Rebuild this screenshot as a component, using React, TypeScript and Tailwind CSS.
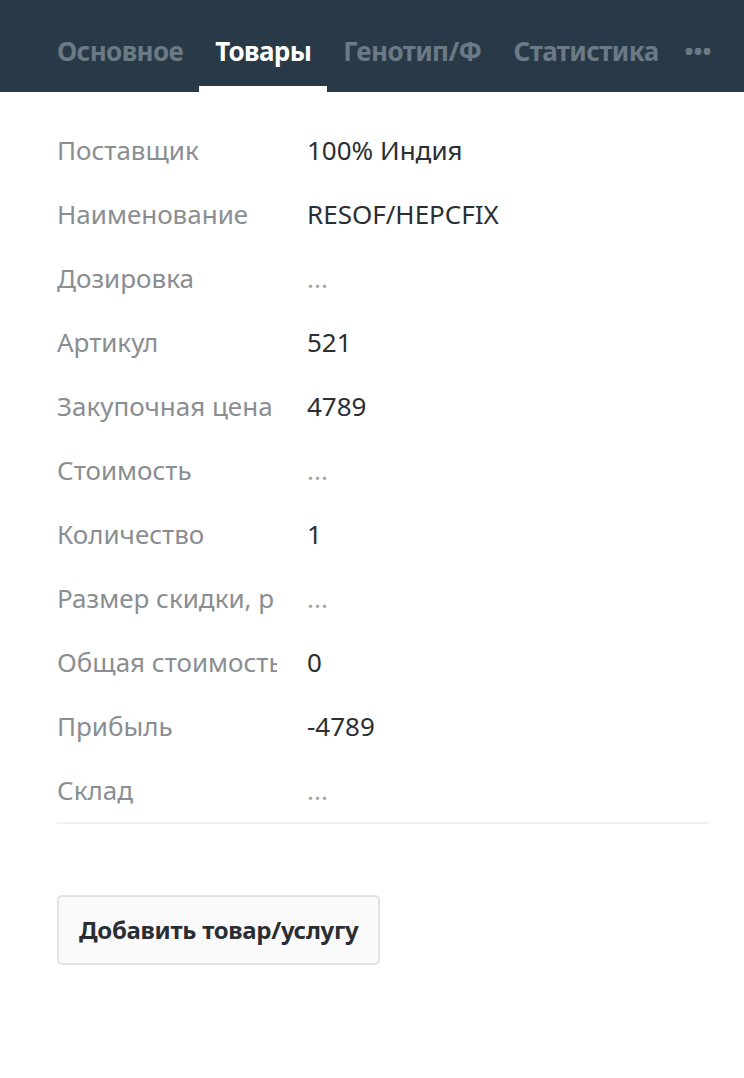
const TABS = ['Основное', 'Товары', 'Генотип/Ф', 'Статистика']

const ROWS: { label: string; value: string }[] = [
  { label: 'Поставщик', value: '100% Индия' },
  { label: 'Наименование', value: 'RESOF/HEPCFIX' },
  { label: 'Дозировка', value: '...' },
  { label: 'Артикул', value: '521' },
  { label: 'Закупочная цена', value: '4789' },
  { label: 'Стоимость', value: '...' },
  { label: 'Количество', value: '1' },
  { label: 'Размер скидки, р', value: '...' },
  { label: 'Общая стоимость', value: '0' },
  { label: 'Прибыль', value: '-4789' },
  { label: 'Склад', value: '...' },
]

export default function App() {
  return (
    <div className="w-[744px] min-h-[1078px] bg-white" style={{ fontFamily: '"Noto Sans", sans-serif' }}>
      {/* Tabs */}
      <div className="h-[92px] bg-[#283a48] flex items-stretch pl-[57px] overflow-hidden">
        {TABS.map((t, i) => (
          <div
            key={t}
            className={
              'relative flex items-center pt-[10px] px-[16px] first:pl-0 text-[26px] font-bold tracking-[-0.6px] whitespace-nowrap ' +
              (i === 1 ? 'text-white' : 'text-[#6b7a85]')
            }
          >
            {t}
            {i === 1 && <div className="absolute left-0 right-0 bottom-0 h-[6px] bg-white" />}
          </div>
        ))}
        <div className="flex items-center pt-[10px] pl-[10px] text-[24px] font-bold text-[#6b7a85] tracking-[0px]">•••</div>
      </div>

      {/* Fields */}
      <div className="pl-[57px] pr-[35px] pt-[26px]">
        <div className="border-b-2 border-[#f0f0f0]">
          {ROWS.map(r => (
            <div key={r.label} className="flex items-center h-[64px] text-[26px]">
              <div className="w-[220px] shrink-0 overflow-hidden whitespace-nowrap text-[#8a8e92]">{r.label}</div>
              <div className={'ml-[30px] ' + (r.value === '...' ? 'text-[#a0a4a8]' : 'text-[#2b2f33]')}>{r.value}</div>
            </div>
          ))}
        </div>

        <button className="mt-[71px] h-[70px] px-[20px] rounded-[5px] border-2 border-[#e2e2e2] bg-[#fafafa] text-[24px] font-bold text-[#2a2e33] tracking-[-0.3px]">
          Добавить товар/услугу
        </button>
      </div>
    </div>
  )
}
